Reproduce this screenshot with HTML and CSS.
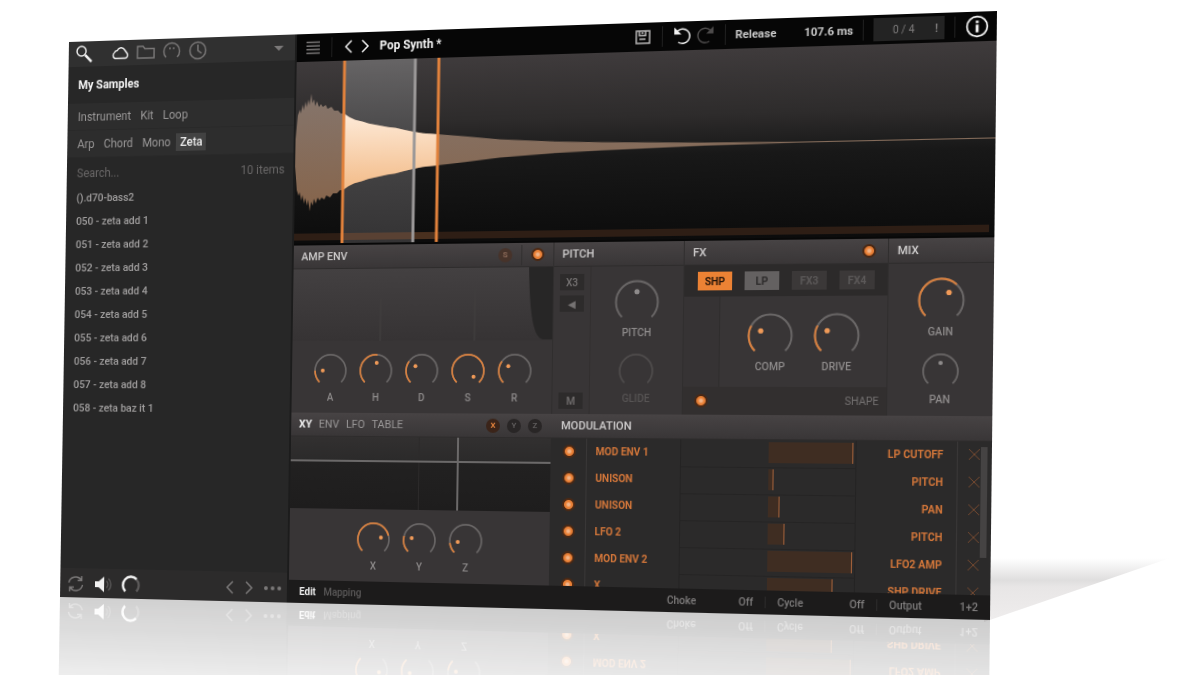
FILE: index.html
```html
<!DOCTYPE html>
<html lang="en">
<head>
    <meta charset="UTF-8">
    <title>Pop Synth</title>
    <link rel="stylesheet" href="styles.css">
</head>
<body>

<div class="scene">
    <div class="floor-shadow"></div>
    <div class="plugin">

        <aside class="browser">
            <div class="browser-tools">
                <button class="tool search on" aria-label="Search"><svg viewBox="0 0 20 20"><circle cx="7" cy="7" r="5"/><path class="thick" d="M11 11l7 7"/></svg></button>
                <button class="tool on" aria-label="Cloud"><svg viewBox="0 0 20 20"><path d="M4.500 15.500a3.500 3.500 0 0 1-.5-6 3 3 0 0 1 3-2 4.500 4.500 0 0 1 8-.5l3 4a3 3 0 0 1-2 4.500z"/></svg></button>
                <button class="tool" aria-label="Folder"><svg viewBox="0 0 20 20"><path d="M1 16V4h6l2 2.500h10V16z"/></svg></button>
                <button class="tool" aria-label="Presets"><svg viewBox="0 0 20 20"><path d="M4 16a8.500 8.500 0 1 1 12 0"/><circle class="fill" cx="8" cy="7" r="1"/><circle class="fill" cx="12" cy="7" r="1"/></svg></button>
                <button class="tool" aria-label="Recent"><svg viewBox="0 0 20 20"><circle cx="10" cy="10" r="8.500"/><path d="M10 4v6l4 3"/></svg></button>
                <button class="caret" aria-label="More"></button>
            </div>
            <h1>My Samples</h1>
            <div class="tags">
                <button>Instrument</button><button>Kit</button><button>Loop</button>
            </div>
            <div class="tags">
                <button>Arp</button><button>Chord</button><button>Mono</button><button class="on">Zeta</button>
            </div>
            <div class="find">
                <input type="text" placeholder="Search..." aria-label="Search samples">
                <span>10 items</span>
            </div>
            <ul class="files">
                <li><a href="#">().d70-bass2</a></li>
                <li><a href="#">050 - zeta add 1</a></li>
                <li><a href="#">051 - zeta add 2</a></li>
                <li><a href="#">052 - zeta add 3</a></li>
                <li><a href="#">053 - zeta add 4</a></li>
                <li><a href="#">054 - zeta add 5</a></li>
                <li><a href="#">055 - zeta add 6</a></li>
                <li><a href="#">056 - zeta add 7</a></li>
                <li><a href="#">057 - zeta add 8</a></li>
                <li><a href="#">058 - zeta baz it 1</a></li>
            </ul>
            <div class="browser-foot">
                <button class="tool" aria-label="Loop"><svg viewBox="0 0 20 20"><path d="M2.500 9a7.500 7 0 0 1 13.500-3M17.500 11a7.500 7 0 0 1-13.500 3M16.500 2v4.500H12M3.500 18v-4.500H8"/></svg></button>
                <button class="tool on" aria-label="Audition"><svg viewBox="0 0 20 20"><path class="fill" d="M1 7h4l6-5v16l-6-5H1z"/><path class="dim" d="M13.500 6.500a5 5 0 0 1 0 7M15.500 4a8 8 0 0 1 0 12"/></svg></button>
                <button class="tool on" aria-label="Level"><svg viewBox="0 0 20 20"><path class="dim thick" d="M4 16.500a8.500 8.500 0 1 1 12 0"/><path class="thick" d="M4 16.500a8.500 8.500 0 0 1 12-12.500"/></svg></button>
                <button class="tool step" aria-label="Previous"><svg viewBox="0 0 10 16"><path d="M8 2L2 8l6 6"/></svg></button>
                <button class="tool step" aria-label="Next"><svg viewBox="0 0 10 16"><path d="M2 2l6 6-6 6"/></svg></button>
                <button class="tool" aria-label="Options"><svg viewBox="0 0 20 20"><circle class="fill" cx="3" cy="10" r="2"/><circle class="fill" cx="10" cy="10" r="2"/><circle class="fill" cx="17" cy="10" r="2"/></svg></button>
            </div>
        </aside>

        <main class="synth">
            <header class="topbar">
                <button class="tool" aria-label="Menu"><svg viewBox="0 0 20 20"><path d="M3 4.500h14M3 8.200h14M3 11.800h14M3 15.500h14"/></svg></button>
                <i class="sep"></i>
                <button class="tool step on" aria-label="Previous preset"><svg viewBox="0 0 10 16"><path d="M8 2L2 8l6 6"/></svg></button>
                <button class="tool step on" aria-label="Next preset"><svg viewBox="0 0 10 16"><path d="M2 2l6 6-6 6"/></svg></button>
                <strong class="preset">Pop Synth *</strong>
                <button class="tool save" aria-label="Save"><svg viewBox="0 0 20 20"><path d="M4 4h13v12H4zM7 4v4.500h6V4M7 12h6M10 5v2"/></svg></button>
                <i class="sep"></i>
                <button class="tool on" aria-label="Undo"><svg viewBox="0 0 20 20"><path d="M5 5.500a7 7 0 1 1 1 10.500"/><path class="fill" d="M2 1.500v7h7z"/></svg></button>
                <button class="tool faint" aria-label="Redo"><svg viewBox="0 0 20 20"><path d="M15 5.500a7 7 0 1 0-1 10.500"/><path class="fill" d="M18 1.500v7h-7z"/></svg></button>
                <i class="sep"></i>
                <div class="readout"><span>Release</span><span>107.6 ms</span></div>
                <i class="sep"></i>
                <div class="voices"><span>0 / 4</span><b>!</b></div>
                <i class="sep"></i>
                <button class="tool info on" aria-label="Info"><svg viewBox="0 0 20 20"><circle cx="10" cy="10" r="8.500"/><path class="thick" d="M10 8.500v6.500M10 5v2"/></svg></button>
            </header>

            <section class="wave" aria-label="Waveform">
                <svg viewBox="0 0 685 185" preserveAspectRatio="none">
                    <defs>
                        <linearGradient id="dim" x1="0" y1="0" x2="0" y2="1">
                            <stop offset="0" stop-color="#85756c"/>
                            <stop offset="1" stop-color="#86644a"/>
                        </linearGradient>
                        <linearGradient id="lit" x1="0" y1="0" x2="0" y2="1">
                            <stop offset="0.100" stop-color="#fff0e2"/>
                            <stop offset="0.800" stop-color="#f3bd8b"/>
                        </linearGradient>
                        <linearGradient id="sel" x1="0" y1="0" x2="0" y2="1">
                            <stop offset="0" stop-color="#666465"/>
                            <stop offset="0.400" stop-color="#4a494a"/>
                            <stop offset="1" stop-color="#343334"/>
                        </linearGradient>
                        <clipPath id="range"><rect x="50" y="0" width="97" height="185"/></clipPath>
                        <path id="shape"/>
                    </defs>
                    <rect x="0" y="175" width="680" height="7" fill="#2e1e15"/>
                    <rect x="50" y="0" width="73" height="185" fill="url(#sel)"/>
                    <rect x="50" y="175" width="73" height="7" fill="#594133"/>
                    <rect x="123" y="175" width="24" height="7" fill="#49301f"/>
                    <use href="#shape" fill="url(#dim)"/>
                    <use href="#shape" fill="url(#lit)" clip-path="url(#range)"/>
                    <path d="M50 0V185M147 0V185" stroke="#e2823c" stroke-width="3"/>
                    <path d="M123 0V185" stroke="#9b9898" stroke-width="3"/>
                </svg>
            </section>

            <div class="row modules">
                <section class="module">
                    <header><h2>AMP ENV</h2><button class="round sync">S</button><i class="sep"></i><input type="checkbox" class="led" aria-label="Amp envelope on" checked></header>
                    <div class="env">
                        <svg viewBox="0 0 265 72" preserveAspectRatio="none">
                            <path d="M241 0C242 40 245 70 256 71H265V0z" fill="#272626"/>
                            <path d="M91 30V72M187 20V72" stroke="#403e3e"/>
                        </svg>
                    </div>
                    <div class="knobs five">
                        <div class="knob" data-name="A" data-value="17"></div>
                        <div class="knob" data-name="H" data-value="52"></div>
                        <div class="knob" data-name="D" data-value="30"></div>
                        <div class="knob" data-name="S" data-value="100"></div>
                        <div class="knob" data-name="R" data-value="30"></div>
                    </div>
                </section>

                <section class="module pitch">
                    <header><h2>PITCH</h2></header>
                    <div class="body">
                        <div class="side">
                            <button>X3</button>
                            <button aria-label="Reverse">&#9664;</button>
                            <button class="last">M</button>
                        </div>
                        <div class="stack">
                            <div class="knob large gray" data-name="PITCH" data-value="50"></div>
                            <div class="knob off" data-name="GLIDE" data-value="0"></div>
                        </div>
                    </div>
                </section>

                <section class="module fx">
                    <header><h2>FX</h2><input type="checkbox" class="led" aria-label="FX on" checked></header>
                    <div class="slots">
                        <button class="on">SHP</button>
                        <button class="used">LP</button>
                        <button>FX3</button>
                        <button>FX4</button>
                    </div>
                    <div class="fx-knobs">
                        <div class="knob large" data-name="COMP" data-value="27"></div>
                        <div class="knob large" data-name="DRIVE" data-value="27"></div>
                    </div>
                    <div class="fx-foot">
                        <input type="checkbox" class="led" id="shape-on" checked>
                        <label for="shape-on">SHAPE</label>
                    </div>
                </section>

                <section class="module mix">
                    <header><h2>MIX</h2></header>
                    <div class="stack">
                        <div class="knob large" data-name="GAIN" data-value="66"></div>
                        <div class="knob gray" data-name="PAN" data-value="50"></div>
                    </div>
                </section>
            </div>

            <div class="row lower">
                <section class="module">
                    <header class="tabs">
                        <button class="on">XY</button><button>ENV</button><button>LFO</button><button>TABLE</button>
                        <div class="axes"><button class="round on">X</button><button class="round">Y</button><button class="round">Z</button></div>
                    </header>
                    <div class="pad"></div>
                    <div class="knobs three">
                        <div class="knob" data-name="X" data-value="78"></div>
                        <div class="knob" data-name="Y" data-value="22"></div>
                        <div class="knob" data-name="Z" data-value="14"></div>
                    </div>
                </section>

                <section class="module modulation">
                    <header><h2>MODULATION</h2></header>
                    <div class="mod-list">
                        <table><tbody id="mods"></tbody></table>
                        <div class="scroll"></div>
                    </div>
                </section>
            </div>

            <footer class="bottombar">
                <button class="on">Edit</button>
                <button>Mapping</button>
                <label class="first">Choke <select><option>Off</option></select></label>
                <label>Cycle <select><option>Off</option></select></label>
                <label>Output <select><option>1+2</option></select></label>
            </footer>
        </main>
    </div>
</div>

<script src="script.js"></script>
</body>
</html>
```
FILE: styles.css
```css
* {
    box-sizing: border-box;
}

body {
    margin: 0;
    background: #fff;
    font-family: Roboto, "Liberation Sans", sans-serif;
    font-size: 12px;
    color: #9a9898;
    overflow: hidden;
}

button, input, select {
    font: inherit;
    color: inherit;
    background: none;
    border: 0;
    padding: 0;
    margin: 0;
}

h1, h2, ul {
    margin: 0;
    padding: 0;
    list-style: none;
}

svg {
    display: block;
    fill: none;
    stroke: currentColor;
    stroke-width: 1.5;
}

.scene {
    position: relative;
    min-height: 100vh;
    padding: 42px 0 0 69px;
    overflow: hidden;
}

/* the window stands on a glossy floor, turned slightly to the left */
.plugin {
    display: grid;
    grid-template-columns: 245fr 685fr;
    width: 77.5vw;
    background: #282828;
    transform-origin: 0 0;
    transform: matrix3d(0.909476, -0.030381, 0, -0.00009523, -0.015691, 0.967545, 0, -0.000004925, 0, 0, 1, 0, 0, 0, 0, 1);
    -webkit-box-reflect: below 0 linear-gradient(transparent 78%, rgba(0, 0, 0, 0.22));
}

.floor-shadow {
    position: absolute;
    left: 82vw;
    top: 558px;
    width: 15.5vw;
    height: 64px;
    background: linear-gradient(#fff, #dfdede 35%, #e8e6e6 45%, #efeded);
    clip-path: polygon(0 0, 100% 0, 0 100%);
}

/* icons */
.tool {
    width: 20px;
    height: 20px;
    color: #7b7979;
}

.tool.on {
    color: #f2f2f2;
}

.tool.faint {
    color: #4d4b4b;
}

.tool.step {
    width: 10px;
    height: 16px;
}

.tool .fill {
    fill: currentColor;
    stroke: none;
}

.tool .thick {
    stroke-width: 2.5;
}

.tool .dim {
    stroke: #5c5a5a;
}

.sep {
    width: 1px;
    height: 20px;
    background: #1f1f1f;
}

/* browser */
.browser {
    display: flex;
    flex-direction: column;
    background: #272727;
    border-right: 2px solid #1c1c1c;
}

.browser-tools {
    display: flex;
    align-items: center;
    gap: 8px;
    height: 26px;
    padding: 0 12px 0 7px;
    background: #303030;
}

.browser-tools .search {
    margin-right: 11px;
}

.caret {
    margin-left: auto;
    border: 5px solid transparent;
    border-top-color: #7b7979;
    border-bottom: 0;
}

.browser h1 {
    padding-left: 11px;
    line-height: 38px;
    font-size: 12px;
    font-weight: 700;
    color: #f4f4f4;
}

.tags {
    display: flex;
    align-items: center;
    gap: 10px;
    height: 28px;
    padding-left: 11px;
    background: #2d2d2d;
    border-bottom: 1px solid #292929;
}

.tags .on {
    margin-left: -4px;
    padding: 2px 4px;
    background: #424242;
    color: #eee;
    font-weight: 500;
}

.find {
    display: flex;
    align-items: center;
    height: 30px;
    padding: 2px 9px 0 11px;
    color: #6a6868;
}

.find input {
    flex: 1;
    min-width: 0;
}

.find input::placeholder {
    color: #6a6868;
}

.files {
    flex: 1;
    font-size: 11px;
    font-weight: 500;
}

.files li {
    padding-left: 11px;
    line-height: 24px;
}

.files a {
    color: #a19f9f;
    text-decoration: none;
}

.browser-foot {
    display: flex;
    align-items: center;
    gap: 10px;
    height: 30px;
    padding: 2px 5px 0 7px;
    background: #2c2b2b;
}

.browser-foot .step:nth-child(4) {
    margin-left: auto;
}

/* top bar */
.synth {
    min-width: 0;
    background: #363334;
}

.topbar {
    display: flex;
    align-items: center;
    height: 28px;
    padding: 0 7px;
    background: #060606;
}

.topbar .tool {
    flex: none;
}

.topbar .sep {
    flex: none;
    margin: 0 9px;
}

.topbar .step {
    margin: 0 4px 0 3px;
}

.preset {
    margin-left: 6px;
    font-size: 12px;
    color: #f4f4f4;
}

.topbar .save {
    margin-left: auto;
    color: #b8b6b6;
}

.topbar .faint {
    margin-left: 2px;
}

.readout {
    display: flex;
    justify-content: space-between;
    width: 112px;
    font-size: 11px;
    font-weight: 700;
    color: #c9c9c9;
}

.voices {
    display: flex;
    align-items: center;
    justify-content: space-between;
    width: 66px;
    height: 22px;
    padding: 0 6px 0 18px;
    font-size: 10px;
    background: #232323;
    color: #7c7a7a;
}

.topbar .info {
    width: 22px;
    height: 22px;
}

/* waveform */
.wave {
    height: 185px;
    border-bottom: 2px solid #080808;
    background: linear-gradient(#3f3b3c, #2d2b2b 35%, #181818 55%, #0c0c0c);
}

.wave svg {
    width: 100%;
    height: 100%;
    stroke: none;
}

/* modules */
.row {
    display: grid;
    height: 168px;
}

.modules {
    grid-template-columns: 265fr 128fr 194fr 98fr;
}

.lower {
    grid-template-columns: 265fr 420fr;
}

.module {
    display: flex;
    flex-direction: column;
    min-width: 0;
    min-height: 0;
}

.module > header {
    display: flex;
    align-items: center;
    gap: 9px;
    flex: none;
    height: 24px;
    padding: 0 9px 0 8px;
    background: linear-gradient(#474344, #393637);
    border-bottom: 1px solid #2e2c2c;
}

h2 {
    margin-right: auto;
    font-size: 11px;
    font-weight: 500;
    color: #d0cece;
}

.module header .sep {
    background: #312f2f;
}

.round {
    width: 14px;
    height: 14px;
    border-radius: 50%;
    background: #292626;
    font-size: 8px;
    font-weight: 700;
    line-height: 14px;
    color: #5e5b5b;
}

.round.sync {
    background: #47332a;
    color: #8e6c5a;
}

.round.on {
    background: #3b2419;
    color: #e2823c;
}

.led {
    appearance: none;
    width: 13px;
    height: 13px;
    border-radius: 50%;
    background: radial-gradient(#f0b489 1px, #e98036 3px, #e98036 4px, #4a2814 5px);
}

.pitch, .mix, .fx {
    border-left: 1px solid #302e2e;
}

.module.fx > header {
    padding-right: 11px;
}

.env {
    flex: 1;
    background: linear-gradient(#434041, #363334);
}

.env svg {
    width: 100%;
    height: 100%;
    stroke: none;
}

.knobs {
    display: flex;
    flex: none;
    gap: 11px;
    height: 72px;
    padding: 12px 0 0 22px;
    background: #383536;
}

.knobs.three {
    padding-left: 69px;
}

/* knobs: the drawn dial lies under an invisible range input */
.knob {
    position: relative;
    width: 36px;
    text-align: center;
}

.knob svg {
    width: 36px;
    height: 36px;
    stroke-width: 1.7;
}

.knob label {
    display: block;
    margin-top: 2px;
    line-height: 14px;
    font-size: 10px;
    font-weight: 500;
    color: #8e8b8b;
}

.knob input {
    position: absolute;
    left: 0;
    top: 0;
    width: 100%;
    height: 100%;
    opacity: 0;
}

.knob .track {
    stroke: #696666;
}

.knob .level {
    stroke: #da813f;
}

.knob .dot {
    fill: #f09a58;
    stroke: none;
}

.knob.large {
    width: 50px;
}

.knob.large svg {
    width: 46px;
    height: 46px;
    margin: 2px;
    stroke-width: 1.5;
}

.knob.large label {
    margin-top: -2px;
}

.knob.gray .level, .knob.off .level, .knob.off .dot {
    display: none;
}

.knob.gray .dot {
    fill: #8e8b8b;
}

.knob.off .track {
    stroke: #4f4c4c;
}

.knob.off label {
    color: #575454;
}

.body {
    display: flex;
    flex: 1;
    background: #383536;
}

.side {
    display: flex;
    flex-direction: column;
    gap: 5px;
    width: 37px;
    padding: 7px 6px 5px;
    border-right: 1px solid #322f2f;
}

.side button {
    height: 16px;
    background: #2d2b2b;
    color: #767373;
    font-size: 10px;
    font-weight: 500;
}

.side .last {
    margin-top: auto;
}

.stack {
    display: flex;
    flex: 1;
    flex-direction: column;
    align-items: center;
    gap: 12px;
    padding-top: 10px;
    background: #383536;
}

.slots {
    display: flex;
    gap: 12px;
    height: 30px;
    padding: 6px 0 0 13px;
    background: #2c2a2a;
}

.slots button {
    width: 33px;
    height: 18px;
    background: #3b3838;
    color: #5b5858;
    font-size: 10px;
    font-weight: 700;
}

.slots .used {
    background: #646161;
    color: #2c2a2a;
}

.slots .on {
    background: #ec8234;
    color: #28160a;
}

.fx-knobs {
    display: flex;
    flex: 1;
    gap: 13px;
    margin-left: 34px;
    padding: 13px 0 0 23px;
    background: #383536;
    border-left: 1px solid #2f2d2d;
}

.fx-foot {
    display: flex;
    align-items: center;
    justify-content: space-between;
    height: 27px;
    padding: 0 7px 0 11px;
    background: #322f2f;
    color: #757272;
    font-size: 10px;
}

/* xy + modulation */
.module > .tabs {
    gap: 7px;
    font-size: 11px;
}

.tabs > .on {
    color: #eee;
    font-weight: 700;
}

.axes {
    display: flex;
    gap: 7px;
    margin-left: auto;
}

.pad {
    flex: 1;
    background:
        linear-gradient(#6b6969, #6b6969) 65% 0 / 2px 100% no-repeat,
        linear-gradient(#6b6969, #6b6969) 0 33% / 100% 2px no-repeat,
        linear-gradient(#2c2a2a, #2c2a2a) 50% 0 / 1px 100% no-repeat,
        linear-gradient(#323030, #2b2a2a 33%, #222121 34%, #1e1d1d);
}

.modulation > header {
    padding-left: 10px;
}

.mod-list {
    position: relative;
    flex: 1;
    min-height: 0;
    overflow: hidden;
    background: #2b2a2a;
}

.mod-list table {
    width: 100%;
    border-collapse: collapse;
    table-layout: fixed;
}

.mod-list td {
    height: 26px;
    padding: 0 0 2px;
    font-size: 10px;
    font-weight: 700;
    color: #d2763a;
}

.mod-list .col-on {
    width: 35px;
    padding-left: 2px;
    border-right: 1px solid #393737;
}

.col-on .led {
    display: block;
    margin: 0 auto;
}

.mod-list .col-source {
    width: 92px;
    padding-left: 9px;
    border-right: 1px solid #242323;
}

.mod-list .col-amount {
    padding-left: 84px;
    border-bottom: 1px solid #252424;
}

.amount {
    height: 20px;
    background: #3f2d22;
    border-right: 1px solid #a0603a;
}

.mod-list .col-target {
    width: 94px;
    padding-right: 12px;
    text-align: right;
    border-left: 1px solid #242323;
    border-right: 1px solid #393737;
}

.mod-list .col-remove {
    width: 32px;
    padding-left: 9px;
}

.col-remove button {
    display: block;
    width: 12px;
    height: 12px;
    color: #70472f;
}

.col-remove svg {
    stroke-width: 1;
}

.scroll {
    position: absolute;
    right: 4px;
    top: 5px;
    width: 6px;
    height: 104px;
    background: #454343;
}

/* bottom bar */
.bottombar {
    display: flex;
    align-items: center;
    gap: 8px;
    height: 23px;
    padding-left: 11px;
    background: #1c1b1b;
    color: #5c5a5a;
    font-size: 10px;
    font-weight: 500;
}

.bottombar .on {
    color: #f0f0f0;
    font-weight: 700;
}

.bottombar label {
    display: flex;
    justify-content: space-between;
    width: 105px;
    margin-left: -8px;
    padding: 0 11px;
    border-left: 1px solid #2c2b2b;
    color: #7f7d7d;
}

.bottombar .first {
    margin-left: auto;
    border-left: 0;
}

.bottombar select {
    appearance: none;
}
```
FILE: script.js
```js
const ARC = "M6.7 29.3A16 16 0 1 1 29.3 29.3";

document.querySelectorAll(".knob").forEach((knob, i) => {
    const name = knob.dataset.name;
    const value = Number(knob.dataset.value);
    const angle = (135 + value * 2.7) * Math.PI / 180;
    const x = 18 + 8 * Math.cos(angle);
    const y = 18 + 8 * Math.sin(angle);
    knob.innerHTML = `
        <svg viewBox="0 0 36 36">
            <path class="track" d="${ARC}"/>
            <path class="level" d="${ARC}" pathLength="100" stroke-dasharray="${value} 200"/>
            <circle class="dot" cx="${x}" cy="${y}" r="2"/>
        </svg>
        <label for="knob${i}">${name}</label>
        <input type="range" id="knob${i}" min="0" max="100" value="${value}">`;
});

// amplitude of the sample at each x, mirrored round the centre line
const amps = [
    [0, 14], [2, 38], [4, 44], [5, 40], [7, 49], [8, 43], [10, 52], [11, 46], [13, 54], [14, 48],
    [16, 60], [17, 50], [19, 54], [20, 47], [22, 52], [24, 46], [26, 49], [28, 46], [31, 48],
    [33, 44], [37, 46], [40, 42], [44, 42], [47, 39], [50, 39], [56, 35], [62, 32], [70, 30],
    [76, 28], [86, 26], [96, 24], [104, 23], [112, 21], [121, 19], [132, 17], [144, 16],
    [175, 13], [210, 9], [260, 6], [312, 4], [412, 1.5], [500, 0.6], [685, 0.6]
];
const upper = amps.map(([x, a]) => `${x} ${92.5 - a}`);
const lower = amps.map(([x, a]) => `${x} ${92.5 + a}`).reverse();
document.getElementById("shape").setAttribute("d", `M${upper.concat(lower).join("L")}Z`);

const mods = [
    ["MOD ENV 1", 80, "LP CUTOFF"],
    ["UNISON", 5, "PITCH"],
    ["UNISON", 11, "PAN"],
    ["LFO 2", 16, "PITCH"],
    ["MOD ENV 2", 80, "LFO2 AMP"],
    ["X", 62, "SHP DRIVE"]
];
document.getElementById("mods").innerHTML = mods.map(([source, amount, target]) => `
    <tr>
        <td class="col-on"><input type="checkbox" class="led" aria-label="${source} on" checked></td>
        <td class="col-source">${source}</td>
        <td class="col-amount"><div class="amount" style="width: ${amount}px"></div></td>
        <td class="col-target">${target}</td>
        <td class="col-remove"><button aria-label="Remove"><svg viewBox="0 0 12 12"><path d="M1 1l10 10M11 1L1 11"/></svg></button></td>
    </tr>`).join("");
```
